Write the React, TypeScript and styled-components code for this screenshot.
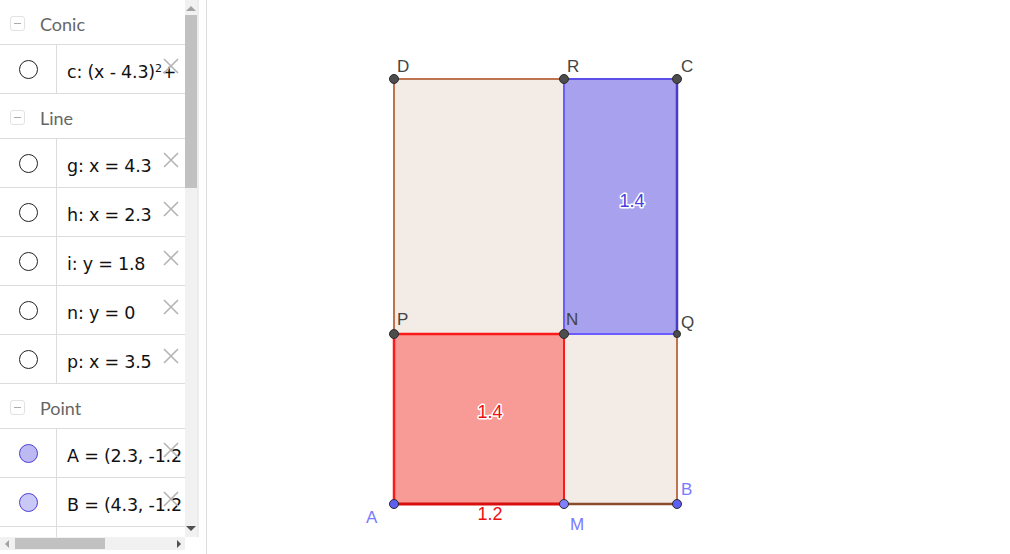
import styled, { createGlobalStyle } from "styled-components"

const GlobalStyle = createGlobalStyle`
  html, body {
    margin: 0;
    padding: 0;
    background: #ffffff;
    overflow: hidden;
  }
`

const Page = styled.div`
  display: flex;
  width: 1010px;
  height: 554px;
  background: #fff;
`

const AlgebraPanel = styled.div`
  display: grid;
  grid-template-columns: 185px 14px;
  grid-template-rows: 537px 17px;
  width: 206px;
  flex-shrink: 0;
  border-right: 1px solid #dcdcdc;
  font-family: "Lato", "Noto Sans", sans-serif;
`

const ListArea = styled.div`
  overflow: hidden;
`

const GroupHeader = styled.div`
  display: flex;
  align-items: center;
  gap: 15px;
  box-sizing: border-box;
  height: 45px;
  padding: 3px 0 0 10px;
  border-bottom: 1px solid #dcdcdc;
  color: #666;
  font-size: 18px;
`

const Collapse = styled.span`
  box-sizing: border-box;
  display: flex;
  align-items: center;
  justify-content: center;
  width: 15px;
  height: 15px;
  border: 1px solid #e2e2e2;
  border-radius: 3px;

  &::before {
    content: "";
    width: 7px;
    height: 1px;
    background: #aaa;
  }
`

const Row = styled.div`
  position: relative;
  display: flex;
  height: 48px;
  border-bottom: 1px solid #dcdcdc;
`

const Marble = styled.div`
  display: flex;
  align-items: center;
  justify-content: center;
  width: 56px;
  flex-shrink: 0;
  border-right: 1px solid #dcdcdc;
`

const Dot = styled.span<{ $fill?: string; $stroke?: string }>`
  box-sizing: border-box;
  width: 19px;
  height: 19px;
  border-radius: 50%;
  border: 1px solid ${(p) => p.$stroke || "#222"};
  background: ${(p) => p.$fill || "transparent"};
`

const Formula = styled.div`
  display: flex;
  align-items: center;
  padding: 5px 0 0 10px;
  white-space: nowrap;
  color: #111;
  font-family: "DejaVu Sans", "Noto Sans", sans-serif;
  font-size: 17.5px;
  letter-spacing: -0.2px;

  sup {
    font-size: 11px;
    line-height: 0;
    position: relative;
    top: -3px;
  }
`

const Delete = styled.svg`
  position: absolute;
  left: 163px;
  top: 13px;
`

const VScroll = styled.div`
  display: flex;
  flex-direction: column;
  align-items: center;
  background: #f1f1f1;
  border-right: 2px solid #ececec;
`

const ArrowUp = styled.span`
  margin-top: 6px;
  width: 0;
  height: 0;
  border-left: 5px solid transparent;
  border-right: 5px solid transparent;
  border-bottom: 5px solid #a3a3a3;
`

const ArrowDown = styled.span`
  margin-top: auto;
  margin-bottom: 6px;
  width: 0;
  height: 0;
  border-left: 5px solid transparent;
  border-right: 5px solid transparent;
  border-top: 5px solid #505050;
`

const VThumb = styled.div`
  margin-top: 4px;
  width: 12px;
  height: 173px;
  background: #c1c1c1;
`

const HScroll = styled.div`
  display: flex;
  align-items: center;
  height: 13px;
  background: #f1f1f1;
`

const ArrowLeft = styled.span`
  margin-left: 5px;
  width: 0;
  height: 0;
  border-top: 4px solid transparent;
  border-bottom: 4px solid transparent;
  border-right: 4px solid #a3a3a3;
`

const ArrowRight = styled.span`
  margin-left: auto;
  margin-right: 4px;
  width: 0;
  height: 0;
  border-top: 4px solid transparent;
  border-bottom: 4px solid transparent;
  border-left: 4px solid #505050;
`

const HThumb = styled.div`
  margin-left: 6px;
  width: 90px;
  height: 11px;
  background: #c1c1c1;
`

const Canvas = styled.div`
  flex: 1;
  position: relative;
`

const groups = [
  {
    name: "Conic",
    items: [{ id: "c", text: <>c: (x - 4.3)<sup>2</sup> +</> }],
  },
  {
    name: "Line",
    items: [
      { id: "g", text: <>g: x = 4.3</> },
      { id: "h", text: <>h: x = 2.3</> },
      { id: "i", text: <>i: y = 1.8</> },
      { id: "n", text: <>n: y = 0</> },
      { id: "p", text: <>p: x = 3.5</> },
    ],
  },
  {
    name: "Point",
    items: [
      { id: "A", text: <>A = (2.3, -1.2</>, fill: "#bdb9f2", stroke: "#4b3ed6" },
      { id: "B", text: <>B = (4.3, -1.2</>, fill: "#cac8f7", stroke: "#4b3ed6" },
      { id: "C", text: null, fill: "#cac8f7", stroke: "#4b3ed6" },
    ],
  },
]

function DeleteIcon() {
  return (
    <Delete width="16" height="16" viewBox="0 0 16 16">
      <path d="M1 1 L15 15 M15 1 L1 15" stroke="#b4b4b4" strokeWidth="1.6" fill="none" />
    </Delete>
  )
}

const dark = ["D", "R", "C", "P", "N", "Q"]

const pts: Record<string, [number, number]> = {
  D: [394, 79],
  R: [564, 79],
  C: [677, 79],
  P: [394, 334],
  N: [564, 334],
  Q: [677, 334],
  A: [394, 504],
  M: [564, 504],
  B: [677, 504],
}

function Drawing() {
  const p = (k: string) => pts[k].join(",")
  const labelStyle = { fontFamily: "'Liberation Sans', Arial, sans-serif", fontSize: 17 }
  return (
    <svg width="803" height="554" viewBox="207 0 803 554">
      <polygon points={[p("D"), p("C"), p("B"), p("A")].join(" ")} fill="#f3ebe6" />
      <line x1={394} y1={79} x2={564} y2={79} stroke="#bd7350" strokeWidth="2" />
      <line x1={394} y1={79} x2={394} y2={334} stroke="#bd7350" strokeWidth="2" />
      <line x1={677} y1={334} x2={677} y2={504} stroke="#bd7350" strokeWidth="2" />
      <line x1={564} y1={504} x2={677} y2={504} stroke="#8b4b2d" strokeWidth="2.5" />

      <polygon points={[p("R"), p("C"), p("Q"), p("N")].join(" ")} fill="#a8a2ee" />
      <line x1={564} y1={79} x2={677} y2={79} stroke="#5a4ee6" strokeWidth="2" />
      <line x1={564} y1={79} x2={564} y2={334} stroke="#6a5cff" strokeWidth="2" />
      <line x1={564} y1={334} x2={677} y2={334} stroke="#6a5cff" strokeWidth="2" />
      <line x1={677} y1={79} x2={677} y2={334} stroke="#4a3bc6" strokeWidth="2.5" />

      <polygon points={[p("P"), p("N"), p("M"), p("A")].join(" ")} fill="#f89a96" />
      <line x1={394} y1={334} x2={564} y2={334} stroke="#ff1a1a" strokeWidth="2.5" />
      <line x1={394} y1={334} x2={394} y2={504} stroke="#ff1a1a" strokeWidth="2.5" />
      <line x1={564} y1={334} x2={564} y2={504} stroke="#ff1a1a" strokeWidth="2" />
      <line x1={394} y1={504} x2={564} y2={504} stroke="#d80f0f" strokeWidth="3" />

      {Object.entries(pts).map(([k, [x, y]]) => (
        <circle
          key={k}
          cx={x}
          cy={y}
          r={k === "Q" ? 3.5 : 4.5}
          fill={dark.includes(k) ? "#4d4d4d" : k === "M" ? "#8080ff" : "#5e5ef2"}
          stroke="#2a2a2a"
          strokeWidth="1"
        />
      ))}

      <g style={labelStyle} fill="#444">
        <text x={397} y={72}>D</text>
        <text x={567} y={72}>R</text>
        <text x={681} y={72}>C</text>
        <text x={397} y={325}>P</text>
        <text x={566} y={325}>N</text>
        <text x={681} y={328}>Q</text>
      </g>
      <g style={labelStyle} fill="#7a7aff">
        <text x={366} y={523}>A</text>
        <text x={570} y={530}>M</text>
        <text x={681} y={495}>B</text>
      </g>
      <g
        style={{ ...labelStyle, fontSize: 18, paintOrder: "stroke" }}
        stroke="#fff"
        strokeWidth="3"
        strokeLinejoin="round"
        textAnchor="middle"
      >
        <text x={632} y={207} fill="#4b3ee0">1.4</text>
        <text x={490} y={418} fill="#ee1010">1.4</text>
        <text x={490} y={520} fill="#ee1010" strokeWidth="0">1.2</text>
      </g>
    </svg>
  )
}

export default function App() {
  return (
    <Page>
      <GlobalStyle />
      <AlgebraPanel>
        <ListArea>
          {groups.map((g) => (
            <div key={g.name}>
              <GroupHeader>
                <Collapse />
                {g.name}
              </GroupHeader>
              {g.items.map((it) => (
                <Row key={it.id}>
                  <Marble>
                    <Dot $fill={(it as any).fill} $stroke={(it as any).stroke} />
                  </Marble>
                  <Formula>{it.text}</Formula>
                  {it.text && <DeleteIcon />}
                </Row>
              ))}
            </div>
          ))}
        </ListArea>
        <VScroll>
          <ArrowUp />
          <VThumb />
          <ArrowDown />
        </VScroll>
        <HScroll>
          <ArrowLeft />
          <HThumb />
          <ArrowRight />
        </HScroll>
        <div />
      </AlgebraPanel>
      <Canvas>
        <Drawing />
      </Canvas>
    </Page>
  )
}
